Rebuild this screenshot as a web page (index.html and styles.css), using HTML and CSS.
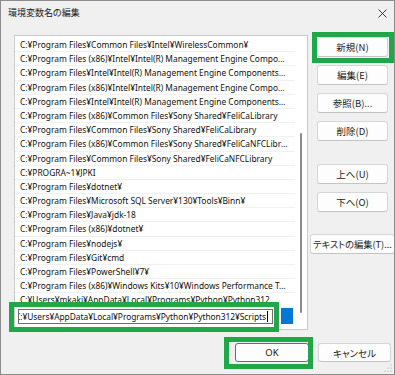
FILE: index.html
```html
<!DOCTYPE html>
<html lang="ja">
<head>
<meta charset="utf-8">
<title>環境変数名の編集</title>
<link rel="stylesheet" href="styles.css">
</head>
<body>
<div class="window">
  <div class="titlebar">
    <span class="title">環境変数名の編集</span>
    <svg class="close" width="9" height="9" viewBox="0 0 9 9"><path d="M0.5 0.5 L8.5 8.5 M8.5 0.5 L0.5 8.5" stroke="#222" stroke-width="0.9" fill="none"/></svg>
  </div>
  <div class="main">
    <div class="list">
      <div class="rows">
        <div class="row">C:¥Program Files¥Common Files¥Intel¥WirelessCommon¥</div>
        <div class="row">C:¥Program Files (x86)¥Intel¥Intel(R) Management Engine Components¥DAL</div>
        <div class="row">C:¥Program Files¥Intel¥Intel(R) Management Engine Components¥DAL</div>
        <div class="row">C:¥Program Files (x86)¥Intel¥Intel(R) Management Engine Components¥IPT</div>
        <div class="row">C:¥Program Files¥Intel¥Intel(R) Management Engine Components¥IPT</div>
        <div class="row">C:¥Program Files (x86)¥Common Files¥Sony Shared¥FeliCaLibrary</div>
        <div class="row">C:¥Program Files¥Common Files¥Sony Shared¥FeliCaLibrary</div>
        <div class="row">C:¥Program Files (x86)¥Common Files¥Sony Shared¥FeliCaNFCLibrary</div>
        <div class="row">C:¥Program Files¥Common Files¥Sony Shared¥FeliCaNFCLibrary</div>
        <div class="row">C:¥PROGRA~1¥JPKI</div>
        <div class="row">C:¥Program Files¥dotnet¥</div>
        <div class="row">C:¥Program Files¥Microsoft SQL Server¥130¥Tools¥Binn¥</div>
        <div class="row">C:¥Program Files¥Java¥jdk-18</div>
        <div class="row">C:¥Program Files (x86)¥dotnet¥</div>
        <div class="row">C:¥Program Files¥nodejs¥</div>
        <div class="row">C:¥Program Files¥Git¥cmd</div>
        <div class="row">C:¥Program Files¥PowerShell¥7¥</div>
        <div class="row">C:¥Program Files (x86)¥Windows Kits¥10¥Windows Performance Toolkit¥</div>
        <div class="row">C:¥Users¥mkaki¥AppData¥Local¥Programs¥Python¥Python312</div>
        <div class="row sel">
          <div class="edit"><span class="edit-text">C:¥Users¥AppData¥Local¥Programs¥Python¥Python312¥Scripts</span><span class="caret"></span></div>
        </div>
      </div>
      <div class="gutter"><div class="thumb"></div></div>
    </div>
    <div class="side">
      <button class="btn">新規(N)</button>
      <button class="btn">編集(E)</button>
      <button class="btn">参照(B)...</button>
      <button class="btn">削除(D)</button>
      <button class="btn sep">上へ(U)</button>
      <button class="btn">下へ(O)</button>
      <button class="btn wide sep2">テキストの編集(T)...</button>
    </div>
  </div>
  <div class="footer">
    <button class="btn ok">OK</button>
    <button class="btn cancel">キャンセル</button>
  </div>
  <div class="annot annot-new"></div>
  <div class="annot annot-edit"></div>
  <div class="annot annot-ok"></div>
  <svg class="grip" width="8" height="8" viewBox="0 0 8 8">
    <circle cx="7" cy="1" r="0.6" fill="#9a9a9a"/>
    <circle cx="4" cy="4" r="0.6" fill="#9a9a9a"/>
    <circle cx="7" cy="4" r="0.6" fill="#9a9a9a"/>
    <circle cx="1" cy="7" r="0.6" fill="#9a9a9a"/>
    <circle cx="4" cy="7" r="0.6" fill="#9a9a9a"/>
    <circle cx="7" cy="7" r="0.6" fill="#9a9a9a"/>
  </svg>
</div>
</body>
</html>
```

FILE: styles.css
```css
* { box-sizing: border-box; }

body {
  margin: 0;
  background: #f0f0f0;
}

.window {
  position: relative;
  width: 395px;
  height: 375px;
  background: #f0f0f0;
  border: 1px solid #8c8c8c;
  display: flex;
  flex-direction: column;
  overflow: hidden;
  font-family: "Noto Sans CJK JP", "Noto Sans", sans-serif;
  color: #1a1a1a;
}

.titlebar {
  height: 29px;
  display: flex;
  justify-content: space-between;
  align-items: flex-start;
  padding: 5px 7px 0 7px;
}

.title {
  font-size: 9px;
  line-height: 14px;
  font-feature-settings: "palt";
}

.close {
  margin-top: 3px;
}

.main {
  display: flex;
  gap: 9px;
  padding: 5px 0 0 13px;
}

.list {
  width: 294px;
  height: 295px;
  background: #fff;
  border: 1px solid #cacaca;
  display: flex;
}

.rows {
  width: 280px;
  padding-top: 2px;
}

.row {
  height: 14.2px;
  line-height: 13px;
  padding: 0 6px 0 5px;
  border-bottom: 1px solid #f1f1f1;
  white-space: nowrap;
  overflow: hidden;
  text-overflow: ellipsis;
  font-family: "Noto Sans", sans-serif;
  font-size: 8.4px;
  color: #111;
}

.row.sel {
  height: 16px;
  padding: 1px 0 0 3px;
  border-bottom: none;
  overflow: visible;
  background: linear-gradient(to right, transparent 266px, #0078d7 266px, #0078d7 278px, transparent 278px);
}

.edit {
  width: 255px;
  height: 15px;
  background: #fff;
  border: 1px solid #6e6e6e;
  display: flex;
  align-items: center;
  justify-content: flex-end;
  padding-right: 4px;
  overflow: hidden;
  line-height: 13px;
}

.edit-text {
  white-space: nowrap;
  flex: none;
  letter-spacing: -0.03px;
}

.caret {
  width: 1px;
  height: 11px;
  margin-left: 1px;
  background: #000;
  flex: none;
}

.gutter {
  flex: 1;
}

.thumb {
  width: 2px;
  height: 180px;
  margin: 97px 0 0 5px;
  background: #8a8a8a;
  border-radius: 1px;
}

.side {
  width: 71px;
  display: flex;
  flex-direction: column;
  align-items: center;
  gap: 8px;
  padding-top: 2px;
}

.btn {
  width: 71px;
  height: 20px;
  padding: 0;
  background: #fdfdfd;
  border: 1px solid #d6d6d6;
  border-bottom-color: #c4c4c4;
  border-radius: 3px;
  font-family: "Noto Sans CJK JP", "Noto Sans", sans-serif;
  font-size: 9.5px;
  line-height: 16px;
  color: #1a1a1a;
  font-feature-settings: "palt";
  flex: none;
}

.btn.sep { margin-top: 15px; }
.btn.sep2 { margin-top: 14px; }

.btn.wide {
  width: auto;
  padding: 0 2px;
  white-space: nowrap;
  font-size: 9.2px;
}

.footer {
  display: flex;
  justify-content: flex-end;
  gap: 9px;
  margin-top: 13px;
  padding-right: 3px;
}

.footer .btn {
  height: 19px;
}

.btn.ok {
  width: 74px;
  border: 1px solid #4e6e9c;
  font-family: "Noto Sans", sans-serif;
}

.btn.cancel {
  width: 73px;
}

.annot {
  position: absolute;
  border: 5px solid #22a64a;
}

.annot-new {
  left: 311px;
  top: 31px;
  width: 82px;
  height: 31px;
}

.annot-edit {
  left: 8px;
  top: 301px;
  width: 270px;
  height: 30px;
}

.annot-ok {
  left: 223px;
  top: 336px;
  width: 89px;
  height: 32px;
}

.grip {
  position: absolute;
  right: 2px;
  bottom: 2px;
}
```
